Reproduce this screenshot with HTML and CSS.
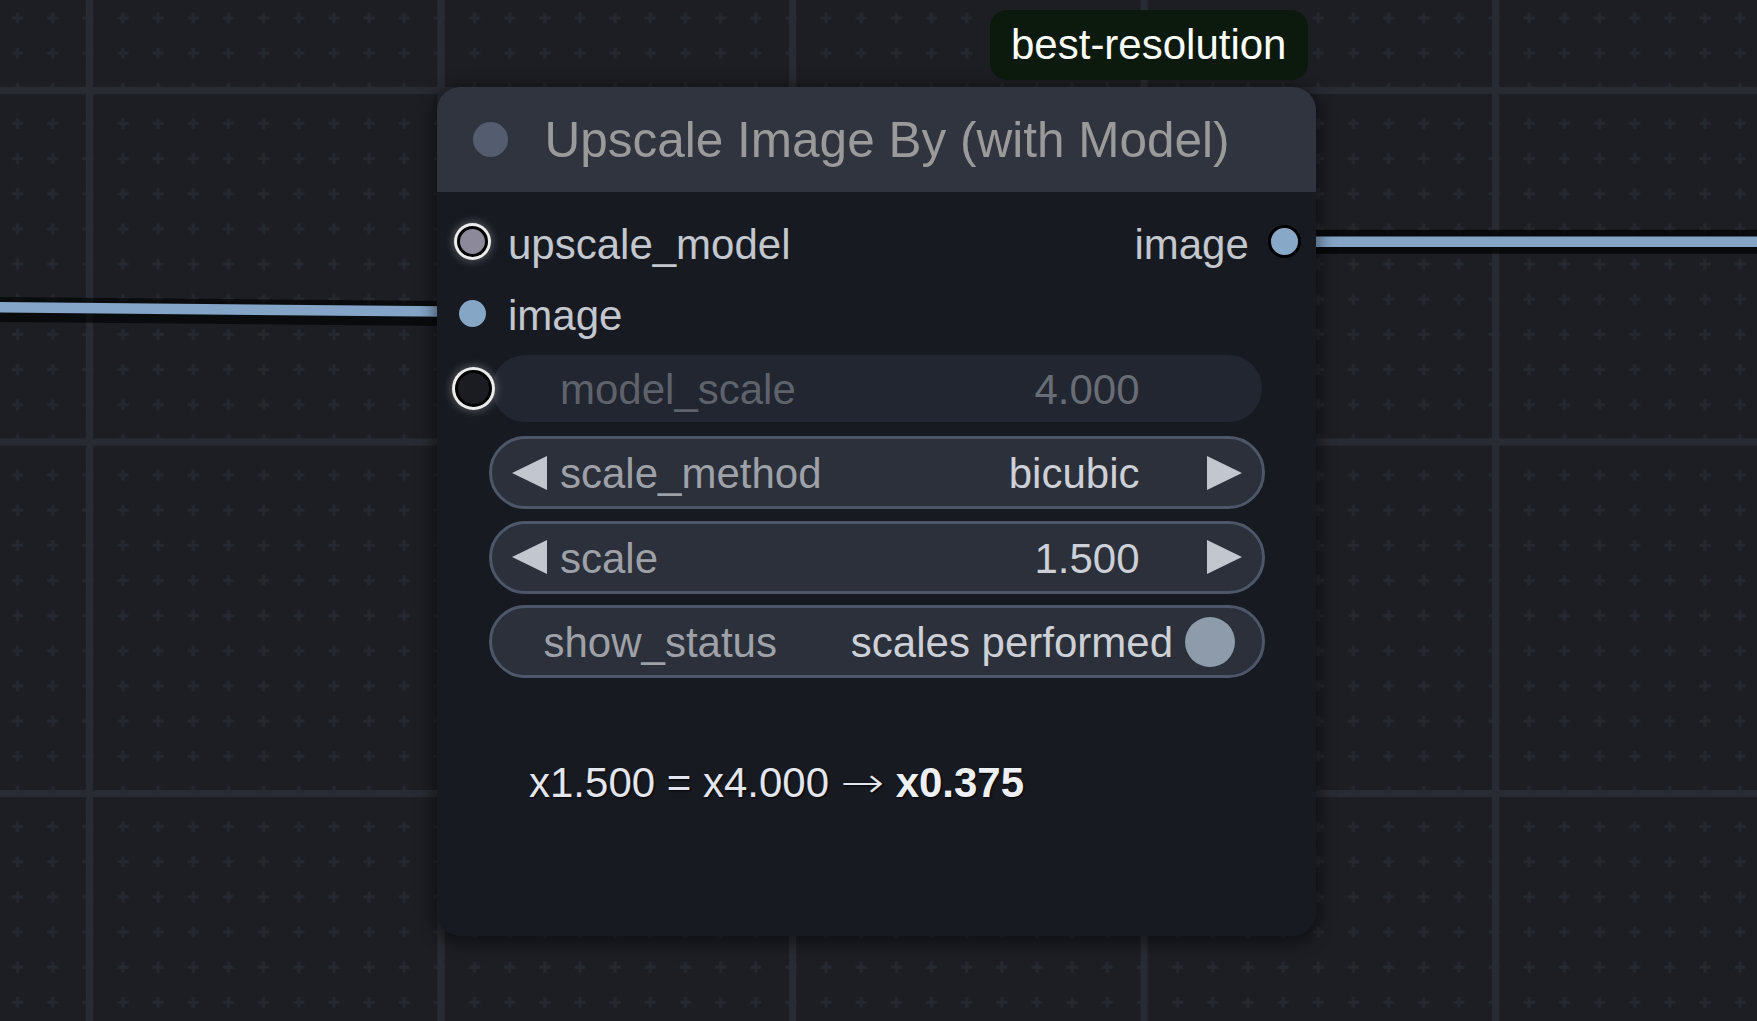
FILE: index.html
```html
<!DOCTYPE html>
<html lang="en">
<head>
<meta charset="utf-8">
<title>Upscale Image By (with Model)</title>
<link rel="stylesheet" href="styles.css">
</head>
<body>
<div class="canvas">
  <svg class="graph-bg" width="1757" height="1021" viewBox="0 0 1757 1021">
    <defs>
      <pattern id="minor" width="35.155" height="35.155" patternUnits="userSpaceOnUse">
        <rect x="12" y="16.5" width="11" height="3" fill="#25282e"/>
        <rect x="16" y="12.5" width="3" height="11" fill="#25282e"/>
      </pattern>
      <pattern id="major" width="351.55" height="351.55" patternUnits="userSpaceOnUse">
        <rect x="86" y="0" width="7" height="351.55" fill="#282b32"/>
        <rect x="0" y="87" width="351.55" height="7" fill="#282b32"/>
      </pattern>
    </defs>
    <rect width="1757" height="1021" fill="#1c1e24"/>
    <rect width="1757" height="1021" fill="url(#minor)"/>
    <rect width="1757" height="1021" fill="url(#major)"/>
    <path d="M -10 309.3 L 472 313.7" stroke="rgba(0,0,0,0.62)" stroke-width="25" fill="none"/>
    <path d="M -10 307.2 L 472 311.7" stroke="#84a5c7" stroke-width="10.5" fill="none"/>
    <line x1="1280" y1="241.7" x2="1760" y2="241.7" stroke="rgba(0,0,0,0.7)" stroke-width="24"/>
    <line x1="1280" y1="241.7" x2="1760" y2="241.7" stroke="#84a5c7" stroke-width="10.5"/>
  </svg>

  <div class="node">
    <div class="node-header">
      <span class="title-dot"></span>
      <span class="title">Upscale Image By (with Model)</span>
    </div>
    <div class="node-body">
      <div class="slot-row">
        <div class="slot slot-in">
          <span class="dot-cell"><span class="dot dot-model"></span></span>
          <span class="slot-label">upscale_model</span>
        </div>
        <div class="slot slot-out">
          <span class="slot-label">image</span>
          <span class="dot-cell"><span class="dot dot-image-out"></span></span>
        </div>
      </div>
      <div class="slot-row slot-row-second">
        <div class="slot slot-in">
          <span class="dot-cell"><span class="dot dot-image-in"></span></span>
          <span class="slot-label">image</span>
        </div>
      </div>

      <div class="widgets">
        <div class="widget widget-disabled">
          <span class="widget-slot"></span>
          <span class="arrow arrow-left arrow-hidden"></span>
          <span class="w-label">model_scale</span>
          <span class="w-value">4.000</span>
          <span class="arrow arrow-right arrow-hidden"></span>
        </div>
        <div class="widget">
          <span class="arrow arrow-left"></span>
          <span class="w-label">scale_method</span>
          <span class="w-value">bicubic</span>
          <span class="arrow arrow-right"></span>
        </div>
        <div class="widget">
          <span class="arrow arrow-left"></span>
          <span class="w-label">scale</span>
          <span class="w-value">1.500</span>
          <span class="arrow arrow-right"></span>
        </div>
        <div class="widget widget-toggle">
          <span class="w-label">show_status</span>
          <span class="w-value">scales performed</span>
          <span class="knob"></span>
        </div>
      </div>

      <div class="status">x1.500 = x4.000 <span class="status-arrow">→</span> <b>x0.375</b></div>
    </div>
  </div>

  <div class="badge">best-resolution</div>
</div>
</body>
</html>
```

FILE: styles.css
```css
* {
  box-sizing: border-box;
}

html, body {
  margin: 0;
  padding: 0;
  background: #1c1e24;
}

.canvas {
  position: relative;
  width: 1757px;
  height: 1021px;
  overflow: hidden;
  font-family: "Liberation Sans", Arial, sans-serif;
}

.graph-bg {
  position: absolute;
  left: 0;
  top: 0;
  display: block;
}

/* ---------- node ---------- */
.node {
  position: absolute;
  left: 437px;
  top: 87px;
  width: 879px;
  height: 849px;
  border-radius: 23px;
  background: #171a21;
  box-shadow: 0 3px 16px 4px rgba(0, 0, 0, 0.45);
  display: flex;
  flex-direction: column;
}

.node-header {
  height: 105px;
  flex: none;
  background: #2f343e;
  border-radius: 23px 23px 0 0;
  display: flex;
  align-items: center;
  padding-left: 35.5px;
}

.title-dot {
  width: 35px;
  height: 35px;
  border-radius: 50%;
  background: #545c70;
  flex: none;
}

.title {
  margin-left: 37px;
  font-size: 49.5px;
  line-height: 49.5px;
  padding-top: 1px;
  color: #9a9a9a;
  white-space: nowrap;
}

.node-body {
  flex: 1;
  display: flex;
  flex-direction: column;
  padding-top: 14.5px;
}

/* ---------- slots ---------- */
.slot-row {
  height: 70.3px;
  display: flex;
  align-items: center;
  justify-content: space-between;
}

.slot-row-second {
  padding-top: 3px;
}

.slot {
  display: flex;
  align-items: center;
  height: 100%;
}

.slot-in {
  padding-left: 15.5px;
}

.slot-out {
  padding-right: 11.7px;
}

.dot-cell {
  width: 40px;
  height: 40px;
  display: flex;
  align-items: center;
  justify-content: center;
  flex: none;
}

.slot-label {
  font-size: 42px;
  line-height: 42px;
  padding-top: 6px;
  color: #c3c7ce;
  white-space: nowrap;
}

.slot-in .slot-label {
  margin-left: 15.5px;
}

.slot-out .slot-label {
  margin-right: 15.5px;
}

.dot {
  display: block;
  border-radius: 50%;
  flex: none;
}

.dot-model {
  width: 31px;
  height: 31px;
  background: #8c899a;
  border: 3.5px solid #000;
  box-shadow: 0 0 0 3px #ececec, 0 0 9px 4px rgba(255, 255, 255, 0.28);
}

.dot-image-in {
  width: 27px;
  height: 27px;
  background: #86a6c6;
}

.dot-image-out {
  width: 32.5px;
  height: 32.5px;
  background: #88a8c8;
  border: 3px solid #000;
}

/* ---------- widgets ---------- */
.widgets {
  margin-top: 4.9px;
  margin-left: 51.5px;
  width: 776px;
  display: flex;
  flex-direction: column;
  gap: 11.4px;
}

.widget {
  position: relative;
  height: 73px;
  border: 3px solid #4e5669;
  border-radius: 37px;
  background: #2b303a;
  display: flex;
  align-items: center;
  padding: 0 20px 0 20.5px;
}

.widget-disabled {
  background: #222630;
  border-color: #171a21;
}

.widget-slot {
  position: absolute;
  left: -37px;
  top: 15.5px;
  width: 37px;
  height: 37px;
  border-radius: 50%;
  background: #1a1c21;
  border: 3.5px solid #000;
  box-shadow: 0 0 0 3px #ececec, 0 0 9px 4px rgba(255, 255, 255, 0.28);
}

.arrow {
  width: 0;
  height: 0;
  flex: none;
  border-top: 17px solid transparent;
  border-bottom: 17px solid transparent;
}

.arrow-left {
  border-right: 35px solid #c2c6ce;
}

.arrow-right {
  border-left: 35.5px solid #c2c6ce;
}

.arrow-hidden {
  visibility: hidden;
}

.w-label {
  flex: 1;
  margin-left: 13px;
  font-size: 42px;
  line-height: 42px;
  padding-top: 2.5px;
  color: #9ea1a7;
  white-space: nowrap;
}

.w-value {
  margin-right: 67px;
  font-size: 42px;
  line-height: 42px;
  padding-top: 2.5px;
  color: #cdd0d6;
  white-space: nowrap;
}

.widget-disabled .w-label {
  color: #5d626b;
}

.widget-disabled .w-value {
  color: #686d75;
}

.widget-toggle {
  padding: 0 26.5px 0 52px;
}

.widget-toggle .w-label {
  margin-left: 0;
}

.widget-toggle .w-value {
  margin-right: 12px;
}

.knob {
  width: 50px;
  height: 50px;
  border-radius: 50%;
  background: #8d9bab;
  flex: none;
}

/* ---------- status ---------- */
.status {
  margin-top: 83.4px;
  height: 42px;
  padding-left: 92px;
  font-size: 42px;
  line-height: 42px;
  color: #e3e6ef;
  white-space: nowrap;
  text-shadow: 1px 1px 2px rgba(0, 0, 0, 0.9);
}

.status-arrow {
  display: inline-block;
  font-family: "DejaVu Sans", sans-serif;
  font-weight: 200;
  font-size: 42px;
  line-height: 42px;
  height: 42px;
  vertical-align: top;
  transform: scaleX(1.25);
  margin: 0 4px;
}

.status b {
  font-weight: 700;
  color: #eef0f6;
}

/* ---------- badge ---------- */
.badge {
  position: absolute;
  left: 990px;
  top: 9.5px;
  width: 318px;
  height: 70.5px;
  border-radius: 17px;
  background: #0c1a0d;
  color: #ffffff;
  font-size: 42px;
  line-height: 42px;
  display: flex;
  align-items: center;
  padding: 0 21px;
  white-space: nowrap;
}
```
